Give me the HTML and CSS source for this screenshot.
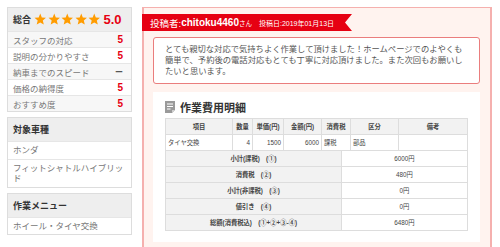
FILE: index.html
```html
<!DOCTYPE html>
<html lang="ja">
<head>
  <meta charset="UTF-8" />
  <title>口コミ詳細</title>
  <link rel="stylesheet" href="styles.css">
</head>
<body>
  <div class="page">
    <aside class="sidebar">
      <div class="side-box">
        <div class="side-head rating-head">
          <span>総合</span>
          <span class="stars">
            <svg viewBox="0 0 24 24"><polygon points="12,1 15,8.6 23,9.2 16.9,14.4 18.8,22.3 12,18 5.2,22.3 7.1,14.4 1,9.2 9,8.6"/></svg>
            <svg viewBox="0 0 24 24"><polygon points="12,1 15,8.6 23,9.2 16.9,14.4 18.8,22.3 12,18 5.2,22.3 7.1,14.4 1,9.2 9,8.6"/></svg>
            <svg viewBox="0 0 24 24"><polygon points="12,1 15,8.6 23,9.2 16.9,14.4 18.8,22.3 12,18 5.2,22.3 7.1,14.4 1,9.2 9,8.6"/></svg>
            <svg viewBox="0 0 24 24"><polygon points="12,1 15,8.6 23,9.2 16.9,14.4 18.8,22.3 12,18 5.2,22.3 7.1,14.4 1,9.2 9,8.6"/></svg>
            <svg viewBox="0 0 24 24"><polygon points="12,1 15,8.6 23,9.2 16.9,14.4 18.8,22.3 12,18 5.2,22.3 7.1,14.4 1,9.2 9,8.6"/></svg>
          </span>
          <span class="score">5.0</span>
        </div>
        <div class="side-row"><span>スタッフの対応</span><b>5</b></div>
        <div class="side-row"><span>説明の分かりやすさ</span><b>5</b></div>
        <div class="side-row"><span>納車までのスピード</span><b class="none">ー</b></div>
        <div class="side-row"><span>価格の納得度</span><b>5</b></div>
        <div class="side-row"><span>おすすめ度</span><b>5</b></div>
      </div>

      <div class="side-box">
        <div class="side-head">対象車種</div>
        <div class="side-item">ホンダ</div>
        <div class="side-item">フィットシャトルハイブリッド</div>
      </div>

      <div class="side-box">
        <div class="side-head">作業メニュー</div>
        <div class="side-item">ホイール・タイヤ交換</div>
      </div>
    </aside>

    <section class="review">
      <div class="ribbon">
        <span class="label">投稿者:</span><span class="user">chitoku4460</span><span class="san">さん</span>
        <span class="date">投稿日:2019年01月13日</span>
      </div>

      <div class="comment">
        とても親切な対応で気持ちよく作業して頂けました！ホームページでのよやくも簡単で、予約後の電話対応もとても丁寧に対応頂けました。また次回もお願いしたいと思います。
      </div>

      <div class="detail">
        <h3>
          <svg class="doc-icon" viewBox="0 0 10 12">
            <path d="M0 0H10V9L7 12H0Z" fill="#9a9a9a"/>
            <path d="M7 12V9H10Z" fill="#cfcfcf"/>
            <rect x="2" y="2.5" width="6" height="1" fill="#fff"/>
            <rect x="2" y="5" width="6" height="1" fill="#fff"/>
            <rect x="2" y="7.5" width="3.5" height="1" fill="#fff"/>
          </svg>
          作業費用明細
        </h3>

        <table class="items">
          <colgroup>
            <col style="width:67px"><col style="width:20px"><col style="width:31px"><col style="width:38px">
            <col style="width:29px"><col style="width:48px"><col style="width:69px">
          </colgroup>
          <thead>
            <tr><th>項目</th><th>数量</th><th>単価(円)</th><th>金額(円)</th><th>消費税</th><th>区分</th><th>備考</th></tr>
          </thead>
          <tbody>
            <tr>
              <td>タイヤ交換</td><td class="num">4</td><td class="num">1500</td><td class="num">6000</td>
              <td>課税</td><td>部品</td><td></td>
            </tr>
          </tbody>
        </table>

        <table class="totals">
          <tr><th>小計(課税)　(①)</th><td>6000円</td></tr>
          <tr><th>消費税　(②)</th><td>480円</td></tr>
          <tr><th>小計(非課税)　(③)</th><td>0円</td></tr>
          <tr><th>値引き　(④)</th><td>0円</td></tr>
          <tr><th>総額(消費税込)　(①+②+③-④)</th><td>6480円</td></tr>
        </table>
      </div>
    </section>
  </div>
</body>
</html>
```

FILE: styles.css
```css
* {
  box-sizing: border-box;
}
body {
  margin: 0;
  background: #fff;
  color: #333;
  font-family: "Liberation Sans", "Noto Sans CJK JP", sans-serif;
}
.page {
  display: flex;
  align-items: flex-start;
  gap: 10px;
  padding: 7px 8px 0 7px;
}

/* sidebar */
.sidebar {
  width: 125px;
  flex-shrink: 0;
  display: flex;
  flex-direction: column;
  gap: 5px;
}
.side-box {
  border: 1px solid #ddd;
  background: #fff;
}
.side-head {
  height: 23px;
  display: flex;
  align-items: center;
  padding: 0 5px;
  background: #eee;
  font-size: 9px;
  font-weight: bold;
  color: #333;
}
.rating-head {
  gap: 3px;
}
.stars {
  display: flex;
  gap: 1px;
}
.stars svg {
  width: 12.5px;
  height: 12.5px;
  fill: #ff9c00;
}
.score {
  font-size: 13px;
  color: #e60012;
}
.side-row {
  height: 16px;
  display: flex;
  align-items: center;
  justify-content: space-between;
  padding: 0 8px 0 5px;
  border-top: 1px solid #e6e6e6;
  font-size: 8.5px;
  color: #777;
}
.side-row:nth-child(even) {
  background: #f7f7f7;
}
.side-row b {
  color: #e60012;
  font-size: 10px;
}
.side-row b.none {
  color: #555;
  font-size: 8px;
}
.side-item {
  padding: 3px 5px;
  border-top: 1px solid #e6e6e6;
  font-size: 8.5px;
  line-height: 10.5px;
  color: #777;
}

/* review */
.review {
  width: 350px;
  min-height: 250px;
  border: 2px solid #f5b0ae;
  border-top-width: 1px;
  background: #fff3ef;
  padding: 6px 10px 0 9px;
}
.ribbon {
  margin-left: -11px;
  width: 210px;
  height: 17px;
  display: flex;
  align-items: center;
  padding-left: 8px;
  background: #e60012;
  color: #fff;
  clip-path: polygon(0 0, 100% 0, calc(100% - 7px) 50%, 100% 100%, 0 100%);
  white-space: nowrap;
}
.ribbon .label {
  font-size: 9.5px;
}
.ribbon .user {
  font-size: 10px;
  font-weight: bold;
}
.ribbon .san {
  font-size: 6.5px;
  margin-right: 7px;
}
.ribbon .date {
  font-size: 7px;
}
.comment {
  margin-top: 6px;
  background: #fff;
  border: 1px solid #ea7d7d;
  border-radius: 3px;
  padding: 6px 14px 6px 11px;
  font-size: 8.3px;
  line-height: 11px;
  color: #555;
}
.detail {
  margin-top: 8px;
  background: #fff;
  padding: 8px 12px 11px 12px;
}
.detail h3 {
  margin: 0 0 4px;
  height: 14px;
  display: flex;
  align-items: center;
  gap: 5px;
  font-size: 11px;
  color: #333;
}
.doc-icon {
  width: 10px;
  height: 12px;
}
table {
  width: 100%;
  border-collapse: collapse;
  table-layout: fixed;
  font-size: 6.3px;
  color: #444;
}
th, td {
  border: 1px solid #ddd;
  height: 16px;
  padding: 0 2px;
  line-height: 8px;
  white-space: nowrap;
}
.items th {
  background: #f2f2f2;
  font-weight: bold;
  text-align: center;
}
.items td {
  text-align: left;
}
.items td.num {
  text-align: right;
}
.totals {
  margin-top: -1px;
}
.totals th {
  width: 176px;
  background: #f2f2f2;
  font-weight: bold;
  text-align: center;
}
.totals td {
  text-align: center;
}
```
